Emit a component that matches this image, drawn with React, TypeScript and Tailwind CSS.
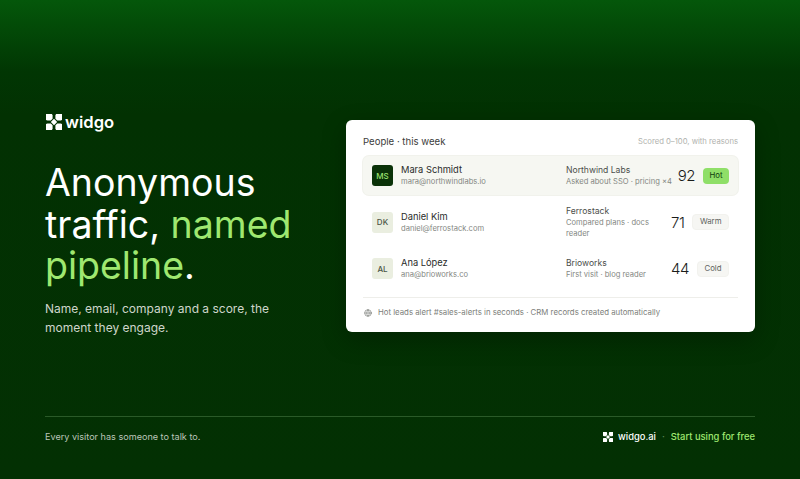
import { Globe } from 'lucide-react';

interface Lead {
  initials: string;
  name: string;
  email: string;
  company: string;
  note: string;
  score: number;
  tag: string;
}

const leads: Lead[] = [
  { initials: 'MS', name: 'Mara Schmidt', email: 'mara@northwindlabs.io', company: 'Northwind Labs', note: 'Asked about SSO · pricing ×4', score: 92, tag: 'Hot' },
  { initials: 'DK', name: 'Daniel Kim', email: 'daniel@ferrostack.com', company: 'Ferrostack', note: 'Compared plans · docs reader', score: 71, tag: 'Warm' },
  { initials: 'AL', name: 'Ana López', email: 'ana@brioworks.co', company: 'Brioworks', note: 'First visit · blog reader', score: 44, tag: 'Cold' },
];

function Logo({ className }: { className: string }) {
  return (
    <svg viewBox="0 0 16 16" className={className} fill="currentColor">
      <path d="M0 0 H6 L6.6 1.4 V4.8 L4.8 6.6 H1.4 L0 6 Z" />
      <path d="M16 0 H10 L9.4 1.4 V4.8 L11.2 6.6 H14.6 L16 6 Z" />
      <path d="M0 16 H6 L6.6 14.6 V11.2 L4.8 9.4 H1.4 L0 10 Z" />
      <path d="M16 16 H10 L9.4 14.6 V11.2 L11.2 9.4 H14.6 L16 10 Z" />
      <path d="M8 4.8 L11.2 8 L8 11.2 L4.8 8 Z" />
    </svg>
  );
}

function LeadRow({ lead, active }: { lead: Lead; active: boolean }) {
  return (
    <div className={`flex h-[39px] items-center rounded-[6px] px-[9px] ${active ? 'bg-[#f6f7f2] shadow-[0_0_0_1px_#f1f2ec]' : ''}`}>
      <div className={`flex h-[21px] w-[21px] shrink-0 items-center justify-center rounded-[3px] text-[8px] font-medium ${active ? 'bg-[#0a3208] text-[#9be36f]' : 'bg-[#eaeee0] text-[#4a5546]'}`}>
        {lead.initials}
      </div>
      <div className="ml-[8px] w-[165px] shrink-0">
        <p className="text-[9.3px] leading-[13px] text-[#2a2c2a]">{lead.name}</p>
        <p className="text-[7.6px] leading-[12px] text-[#858883]">{lead.email}</p>
      </div>
      <div className="min-w-0 flex-1 pr-[2px]">
        <p className="text-[8.6px] leading-[12px] text-[#4b4e4a]">{lead.company}</p>
        <p className="text-[7.6px] leading-[11px] text-[#858883]">{lead.note}</p>
      </div>
      <div className="flex shrink-0 items-center gap-[8px]">
        <span className="text-[15px] leading-none font-light tracking-[-0.03em] text-[#1a1c1a]">{lead.score}</span>
        <span className={`flex h-[16px] items-center rounded-[4px] px-[6.5px] text-[7.8px] ${active ? 'bg-[#8fdf68] text-[#0f3d0b]' : 'border border-[#f2f2ee] bg-[#f6f6f3] text-[#60635e]'}`}>
          {lead.tag}
        </span>
      </div>
    </div>
  );
}

export default function App() {
  return (
    <div className="flex h-[479px] w-[800px] flex-col bg-[linear-gradient(180deg,#04570a_0%,#013603_15%,#023102_24%,#033003_100%)] px-[45px] font-['Inter',sans-serif]">
      <div className="flex flex-1 items-start justify-between pt-[112px]">
        <div className="w-[260px]">
          <div className="flex items-center gap-[3px] text-white">
            <Logo className="ml-px h-[16px] w-[16px]" />
            <span className="text-[16.6px] leading-[20px] font-semibold">widgo</span>
          </div>
          <h1 className="mt-[30px] text-[37.5px] leading-[41.5px] font-normal text-white">
            Anonymous traffic, <span className="text-[#9fe870]">named</span> <span className="text-[#9fe870]">pipeline</span>.
          </h1>
          <p className="mt-[12px] w-[240px] text-[12px] leading-[19px] text-[#cfd6cb]">
            Name, email, company and a score, the moment they engage.
          </p>
        </div>
        <div className="mt-[8px] h-[212px] w-[409px] rounded-[6px] bg-white px-[17px] pt-[15px] shadow-[0_8px_24px_rgba(0,0,0,0.25)]">
          <div className="flex items-center justify-between">
            <p className="text-[9.6px] leading-[13px] text-[#3b3d3b]">People · this week</p>
            <p className="text-[7.7px] text-[#b0b2ae]">Scored 0–100, with reasons</p>
          </div>
          <div className="mt-[8px] space-y-[7.5px]">
            {leads.map((lead, i) => (
              <LeadRow key={lead.name} lead={lead} active={i === 0} />
            ))}
          </div>
          <div className="mt-[9px] flex items-center gap-[6px] border-t border-[#eeeeea] px-[1px] pt-[9px] text-[7.8px] text-[#7d807b]">
            <Globe className="h-[8px] w-[8px]" />
            <span>Hot leads alert #sales-alerts in seconds · CRM records created automatically</span>
          </div>
        </div>
      </div>
      <div className="mb-[35px] flex h-[28px] items-end justify-between border-t border-[#2a5a28] text-[9.1px] leading-[14px]">
        <span className="text-[#bcc5b9]">Every visitor has someone to talk to.</span>
        <div className="flex items-center gap-[5px] text-[9.4px] font-medium">
          <Logo className="h-[10px] w-[10px] text-white" />
          <span className="text-white">widgo.ai</span>
          <span className="px-[1px] text-[#5b8a55]">·</span>
          <span className="text-[#9fe870]">Start using for free</span>
        </div>
      </div>
    </div>
  );
}
